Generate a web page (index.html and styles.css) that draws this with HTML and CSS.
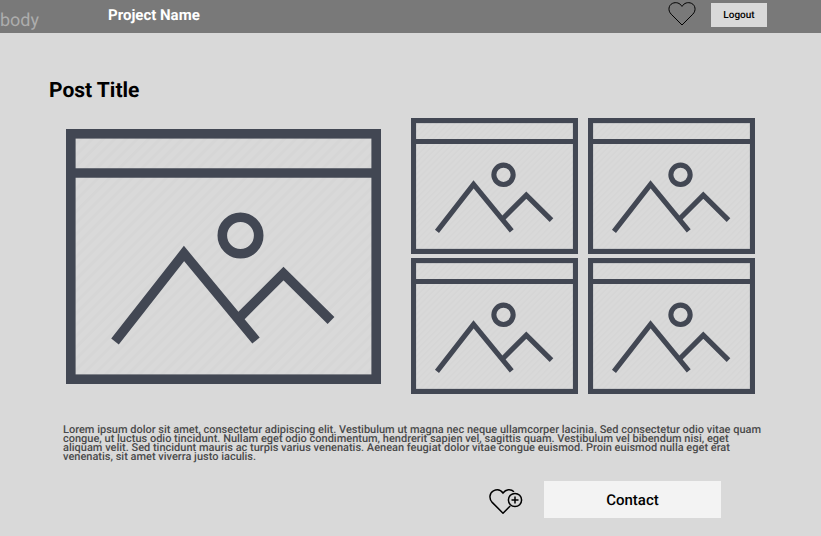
FILE: index.html
```html
<!DOCTYPE html>
<html lang="en">
<head>
<meta charset="utf-8">
<meta name="viewport" content="width=device-width, initial-scale=1">
<title>Post Title</title>
<link rel="stylesheet" href="styles.css">
</head>
<body>
<svg class="sprite" aria-hidden="true">
  <defs>
    <pattern id="hatch" width="8" height="8" patternUnits="userSpaceOnUse" patternTransform="rotate(45)">
      <rect width="3" height="8" fill="#d6d6d6"/>
    </pattern>
    <symbol id="picture" viewBox="0 0 315 255" preserveAspectRatio="none">
      <rect width="315" height="255" fill="url(#hatch)"/>
      <g fill="none" stroke="#424753" stroke-width="9.6">
        <rect x="4.8" y="4.8" width="305.4" height="245.4"/>
        <path d="M5 44H310"/>
        <circle cx="174.5" cy="106.5" r="18.2"/>
        <path d="M49 212.500L118 124.500L190 211.500"/>
        <path d="M173 189L217.500 144.500L265 191.500"/>
      </g>
    </symbol>
  </defs>
</svg>
<header class="topbar">
  <span class="tag">body</span>
  <a class="brand" href="#">Project Name</a>
  <button class="icon-button" type="button" aria-label="Favourites">
    <svg class="heart" viewBox="0 0 28 24"><path d="M14 23L3.200 12.200C-.4 8.500 .6 3.200 4.400 1.400C8.200-.3 11.800 1 14 4.400C16.200 1 19.800-.3 23.600 1.400C27.400 3.200 28.400 8.500 24.800 12.200Z"/></svg>
  </button>
  <button class="logout" type="button">Logout</button>
</header>
<main>
  <h1>Post Title</h1>
  <section class="gallery" aria-label="Pictures">
    <svg class="large"><use href="#picture"/></svg>
    <div class="thumbs">
      <svg class="thumb"><use href="#picture"/></svg>
      <svg class="thumb"><use href="#picture"/></svg>
      <svg class="thumb"><use href="#picture"/></svg>
      <svg class="thumb"><use href="#picture"/></svg>
    </div>
  </section>
  <p class="text">Lorem ipsum dolor sit amet, consectetur adipiscing elit. Vestibulum ut magna nec neque ullamcorper lacinia. Sed consectetur odio vitae quam congue, ut luctus odio tincidunt. Nullam eget odio condimentum, hendrerit sapien vel, sagittis quam. Vestibulum vel bibendum nisi, eget aliquam velit. Sed tincidunt mauris ac turpis varius venenatis. Aenean feugiat dolor vitae congue euismod. Proin euismod nulla eget erat venenatis, sit amet viverra justo iaculis.</p>
  <div class="actions">
    <button class="icon-button" type="button" aria-label="Add to favourites">
      <svg class="heart-plus" viewBox="0 0 34 28"><path d="M21.200 20L14 27.200L3.200 16.400C-.4 12.600 .6 6.800 4.400 4.900C8.200 3 11.800 4 14 7C16.800 3.500 21.500 2.500 25 5.800"/><circle cx="26" cy="14" r="6.600"/><path d="M26 10.500V17.500M22.500 14H29.500"/></svg>
    </button>
    <button class="contact" type="button">Contact</button>
  </div>
</main>
</body>
</html>
```

FILE: styles.css
```css
* {
  box-sizing: border-box;
}

body {
  margin: 0;
  background: #d9d9d9;
  color: #000;
  font-family: Roboto, "Liberation Sans", sans-serif;
  text-rendering: geometricPrecision;
}

.sprite {
  position: absolute;
  width: 0;
  height: 0;
}

button {
  border: 0;
  padding: 0;
  font-family: inherit;
  font-weight: 500;
  color: #000;
  text-rendering: inherit;
}

.topbar {
  display: flex;
  align-items: flex-start;
  height: 33px;
  padding: 2px 54px 0 0;
  background: #797979;
}

.tag {
  width: 108px;
  padding-top: 9px;
  font-size: 18px;
  line-height: 20px;
  color: #adadad;
}

.brand {
  margin-right: auto;
  padding-top: 4px;
  font-size: 15px;
  line-height: 18px;
  font-weight: 700;
  color: #fff;
  text-decoration: none;
}

.icon-button {
  display: block;
  background: none;
}

.icon-button svg {
  display: block;
  fill: none;
  stroke: #000;
}

.heart {
  width: 28px;
  height: 24px;
}

.heart-plus {
  width: 34px;
  height: 28px;
  stroke-width: 1.5px;
}

.logout {
  width: 56px;
  height: 24px;
  margin-top: 1px;
  margin-left: 15px;
  background: #d9d9d9;
  font-size: 10px;
}

h1 {
  margin: 0;
  padding: 46px 49px 0;
  font-size: 21px;
  line-height: 24px;
  font-weight: 700;
}

.gallery {
  display: grid;
  grid-template-columns: 315fr 344fr;
  gap: 30px;
  align-items: center;
  padding: 15px 66px 0;
}

.gallery svg {
  display: block;
  width: 100%;
}

.large {
  aspect-ratio: 315 / 255;
}

.thumbs {
  display: grid;
  grid-template-columns: 1fr 1fr;
  gap: 4px 10px;
}

.thumb {
  aspect-ratio: 167 / 136;
}

.text {
  margin: 0;
  padding: 31px 52px 0 63px;
  font-size: 11px;
  line-height: 9px;
  font-weight: 500;
  color: #4a4a4a;
}

.actions {
  display: flex;
  justify-content: flex-end;
  align-items: center;
  gap: 21px;
  padding: 20px 100px 16px;
}

.contact {
  width: 177px;
  height: 37px;
  background: #f3f3f3;
  font-size: 15px;
}
```
